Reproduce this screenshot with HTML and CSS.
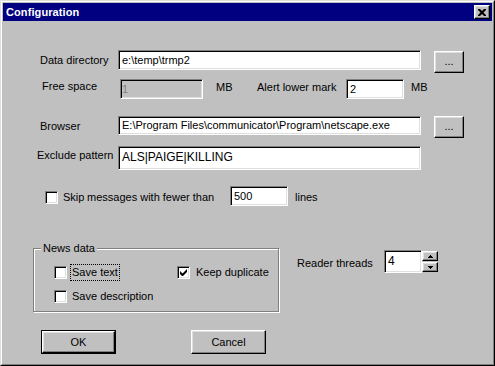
FILE: index.html
```html
<!DOCTYPE html>
<html>
<head>
<meta charset="utf-8">
<link rel="stylesheet" href="styles.css">
</head>
<body>
<div class="window">
  <div class="frame">
    <div class="titlebar">
      <span class="title">Configuration</span>
      <div class="close">
        <svg width="8" height="7" viewBox="0 0 8 7"><path d="M0 0h2l2 2 2-2h2v1l-2.5 2.5L8 6v1H6L4 5 2 7H0V6l2.5-2.5L0 1z" fill="#000"/></svg>
      </div>
    </div>
    <div class="content">
      <div class="row r1">
        <span class="lbl l-data">Data directory</span>
        <div class="field path">e:\temp\trmp2</div>
        <div class="btn browse">...</div>
      </div>
      <div class="row r2">
        <span class="lbl l-free">Free space</span>
        <div class="field free disabled">1</div>
        <span class="unit unit1">MB</span>
        <span class="lbl l-alert">Alert lower mark</span>
        <div class="field alert">2</div>
        <span class="unit unit2">MB</span>
      </div>
      <div class="row r3">
        <span class="lbl l-data">Browser</span>
        <div class="field path">E:\Program Files\communicator\Program\netscape.exe</div>
        <div class="btn browse">...</div>
      </div>
      <div class="row r4">
        <span class="lbl l-excl">Exclude pattern</span>
        <div class="field path tall">ALS|PAIGE|KILLING</div>
      </div>
      <div class="row r5">
        <span class="check skipbox"></span>
        <span class="skip">Skip</span>
        <span class="msgs">messages with fewer than</span>
        <div class="field lines">500</div>
        <span class="unit unit3">lines</span>
      </div>
      <div class="lower">
        <div class="group">
          <span class="legend">News data</span>
          <div class="opts">
            <div class="opt"><span class="check"></span><span class="otext focus">Save text</span></div>
            <div class="opt"><span class="check checked"><svg width="7" height="7" viewBox="0 0 7 7"><path d="M0 2v3l2 2h1l4-4V0L2.5 4.5z" fill="#000"/></svg></span><span class="otext">Keep duplicate</span></div>
            <div class="opt"><span class="check"></span><span class="otext">Save description</span></div>
          </div>
        </div>
        <div class="reader">
          <span class="lbl l-reader">Reader threads</span>
          <div class="field threads">4</div>
          <div class="spin">
            <div class="btn sbtn"><svg width="5" height="3" viewBox="0 0 5 3"><path d="M2 0h1v1h1v1h1v1H0V2h1V1h1z" fill="#000"/></svg></div>
            <div class="btn sbtn"><svg width="5" height="3" viewBox="0 0 5 3"><path d="M0 0h5v1H4v1H3v1H2V2H1V1H0z" fill="#000"/></svg></div>
          </div>
        </div>
      </div>
      <div class="actions">
        <div class="default"><div class="btn push">OK</div></div>
        <div class="btn push cancel">Cancel</div>
      </div>
    </div>
  </div>
</div>
</body>
</html>
```

FILE: styles.css
```css
* { box-sizing: border-box; }
html, body { margin: 0; padding: 0; }
body {
  width: 495px;
  height: 366px;
  background: #c0c0c0;
  font-family: "Liberation Sans", Arial, sans-serif;
  font-size: 11px;
  color: #000;
  overflow: hidden;
}
.window {
  width: 495px;
  height: 366px;
  border: 1px solid;
  border-color: #dfdfdf #000 #000 #dfdfdf;
  background: #c0c0c0;
}
.frame {
  height: 100%;
  border: 1px solid;
  border-color: #fff #808080 #808080 #fff;
  padding: 1px;
}
.titlebar {
  height: 18px;
  background: #000080;
  display: flex;
  align-items: center;
  justify-content: space-between;
  padding: 0 2px 0 3px;
}
.title {
  color: #fff;
  font-weight: bold;
  font-size: 11px;
  letter-spacing: 0.1px;
}
.close {
  width: 16px;
  height: 14px;
  background: #c0c0c0;
  border: 1px solid;
  border-color: #fff #000 #000 #fff;
  box-shadow: inset -1px -1px #808080, inset 1px 1px #dfdfdf;
  display: flex;
  align-items: center;
  justify-content: center;
  padding-right: 1px;
}
.close svg { display: block; }
.content { display: flex; flex-direction: column; }
.row { display: flex; align-items: flex-start; }
.lbl { display: block; line-height: 13px; }
.field {
  background: #fff;
  border: 1px solid;
  border-color: #808080 #fff #fff #808080;
  box-shadow: inset 1px 1px #000, inset -1px -1px #dfdfdf;
  height: 20px;
  padding: 3px 0 0 3px;
  line-height: 13px;
  white-space: nowrap;
  overflow: hidden;
}
.field.disabled { background: #c0c0c0; color: #808080; }
.btn {
  background: #c0c0c0;
  border: 1px solid;
  border-color: #fff #000 #000 #fff;
  box-shadow: inset -1px -1px #808080, inset 1px 1px #dfdfdf;
  display: flex;
  align-items: center;
  justify-content: center;
}
.r1 { margin-top: 29px; height: 23px; }
.r1 .lbl, .r3 .lbl { width: 115px; padding-left: 37px; margin-top: 4px; }
.path { width: 303px; }
.browse { width: 30px; height: 22px; margin-left: 13px; margin-top: 1px; padding-bottom: 3px; }
.r2 { margin-top: 6px; height: 20px; }
.r2 .lbl, .r2 .unit { margin-top: 1px; line-height: 13px; }
.l-free { width: 117px; padding-left: 39px; }
.free { width: 83px; padding-left: 1px; }
.unit1 { width: 41px; margin-left: 13px; margin-top: 2px !important; }
.l-alert { width: 89px; margin-top: 2px !important; }
.alert { width: 58px; padding-left: 3px; }
.unit2 { margin-left: 7px; margin-top: 2px !important; }
.r3 { margin-top: 16px; height: 22px; }
.r3 .path { margin-top: 1px; height: 19px; padding-top: 2px; }
.r3 .lbl { margin-top: 5px; }
.r4 { margin-top: 9px; height: 25px; }
.l-excl { width: 115px; padding-left: 34px; margin-top: 3px; }
.tall { height: 24px; padding-top: 4px; font-size: 12px; }
.r5 { margin-top: 15px; height: 19px; align-items: center; }
.check {
  width: 13px;
  height: 13px;
  background: #fff;
  border: 1px solid;
  border-color: #808080 #fff #fff #808080;
  box-shadow: inset 1px 1px #000, inset -1px -1px #dfdfdf;
  display: flex;
  align-items: center;
  justify-content: center;
  flex: none;
}
.skipbox { margin-left: 42px; margin-top: 3px; }
.skip { width: 24px; margin-left: 5px; margin-top: 2px; }
.msgs { width: 143px; margin-top: 2px; }
.lines { width: 58px; }
.unit3 { margin-left: 7px; margin-top: 2px; }
.lower { display: flex; margin-top: 43px; align-items: flex-start; }
.group {
  position: relative;
  width: 246px;
  height: 64px;
  margin-left: 30px;
  border: 1px solid #808080;
  box-shadow: inset 1px 1px #fff, 1px 1px #fff;
  padding: 17px 0 0 20px;
}
.legend {
  position: absolute;
  left: 7px;
  top: -7px;
  background: #c0c0c0;
  padding: 0 2px;
  line-height: 13px;
}
.opts {
  display: grid;
  grid-template-columns: 123px auto;
  row-gap: 11px;
}
.opt { display: flex; align-items: center; height: 13px; }
.otext { margin-left: 3px; padding: 1px 1px; line-height: 13px; border: 1px solid transparent; }
.otext.focus { border: 1px dotted #000; }
.opt:nth-child(2) .otext { margin-left: 4px; }
.reader { display: flex; align-items: flex-start; margin-left: 18px; margin-top: 2px; }
.l-reader { width: 87px; margin-top: 7px; }
.threads { width: 38px; height: 23px; padding-top: 4px; font-size: 12px; }
.spin { display: flex; flex-direction: column; gap: 1px; margin-top: 1px; }
.sbtn { width: 16px; height: 10px; }
.sbtn svg { display: block; }
.actions { display: flex; margin-top: 18px; }
.default { margin-left: 38px; border: 1px solid #000; }
.push { width: 73px; height: 22px; padding-bottom: 1px; }
.cancel { width: 75px; height: 24px; margin-left: 75px; }
```
